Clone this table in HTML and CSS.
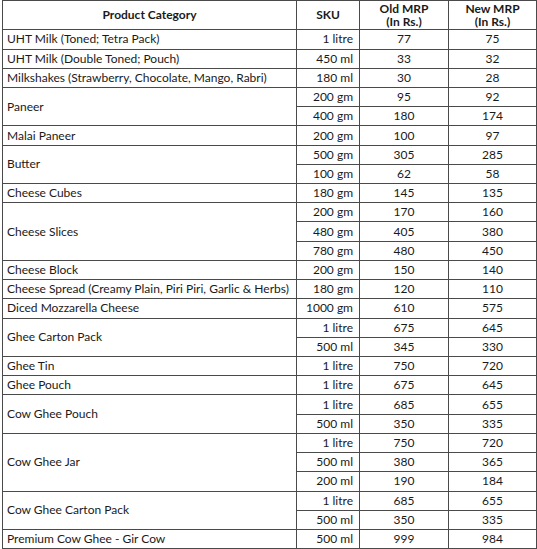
FILE: index.html
```html
<!DOCTYPE html>
<html>
<head>
<meta charset="utf-8">
<link rel="stylesheet" href="styles.css">
</head>
<body>
<table class="mrp">
  <colgroup>
    <col class="c-cat"><col class="c-sku"><col class="c-old"><col class="c-new">
  </colgroup>
  <thead>
    <tr class="head">
      <th>Product Category</th>
      <th>SKU</th>
      <th>Old MRP<br>(In Rs.)</th>
      <th>New MRP<br>(In Rs.)</th>
    </tr>
  </thead>
  <tbody>
    <tr><td class="cat">UHT Milk (Toned; Tetra Pack)</td><td class="sku">1 litre</td><td class="num">77</td><td class="num">75</td></tr>
    <tr><td class="cat">UHT Milk (Double Toned; Pouch)</td><td class="sku">450 ml</td><td class="num">33</td><td class="num">32</td></tr>
    <tr><td class="cat">Milkshakes (Strawberry, Chocolate, Mango, Rabri)</td><td class="sku">180 ml</td><td class="num">30</td><td class="num">28</td></tr>
    <tr><td class="cat" rowspan="2">Paneer</td><td class="sku">200 gm</td><td class="num">95</td><td class="num">92</td></tr>
    <tr><td class="sku">400 gm</td><td class="num">180</td><td class="num">174</td></tr>
    <tr><td class="cat">Malai Paneer</td><td class="sku">200 gm</td><td class="num">100</td><td class="num">97</td></tr>
    <tr><td class="cat" rowspan="2">Butter</td><td class="sku">500 gm</td><td class="num">305</td><td class="num">285</td></tr>
    <tr><td class="sku">100 gm</td><td class="num">62</td><td class="num">58</td></tr>
    <tr><td class="cat">Cheese Cubes</td><td class="sku">180 gm</td><td class="num">145</td><td class="num">135</td></tr>
    <tr><td class="cat" rowspan="3">Cheese Slices</td><td class="sku">200 gm</td><td class="num">170</td><td class="num">160</td></tr>
    <tr><td class="sku">480 gm</td><td class="num">405</td><td class="num">380</td></tr>
    <tr><td class="sku">780 gm</td><td class="num">480</td><td class="num">450</td></tr>
    <tr><td class="cat">Cheese Block</td><td class="sku">200 gm</td><td class="num">150</td><td class="num">140</td></tr>
    <tr><td class="cat">Cheese Spread (Creamy Plain, Piri Piri, Garlic &amp; Herbs)</td><td class="sku">180 gm</td><td class="num">120</td><td class="num">110</td></tr>
    <tr><td class="cat">Diced Mozzarella Cheese</td><td class="sku">1000 gm</td><td class="num">610</td><td class="num">575</td></tr>
    <tr><td class="cat" rowspan="2">Ghee Carton Pack</td><td class="sku">1 litre</td><td class="num">675</td><td class="num">645</td></tr>
    <tr><td class="sku">500 ml</td><td class="num">345</td><td class="num">330</td></tr>
    <tr><td class="cat">Ghee Tin</td><td class="sku">1 litre</td><td class="num">750</td><td class="num">720</td></tr>
    <tr><td class="cat">Ghee Pouch</td><td class="sku">1 litre</td><td class="num">675</td><td class="num">645</td></tr>
    <tr><td class="cat" rowspan="2">Cow Ghee Pouch</td><td class="sku">1 litre</td><td class="num">685</td><td class="num">655</td></tr>
    <tr><td class="sku">500 ml</td><td class="num">350</td><td class="num">335</td></tr>
    <tr><td class="cat" rowspan="3">Cow Ghee Jar</td><td class="sku">1 litre</td><td class="num">750</td><td class="num">720</td></tr>
    <tr><td class="sku">500 ml</td><td class="num">380</td><td class="num">365</td></tr>
    <tr><td class="sku">200 ml</td><td class="num">190</td><td class="num">184</td></tr>
    <tr><td class="cat" rowspan="2">Cow Ghee Carton Pack</td><td class="sku">1 litre</td><td class="num">685</td><td class="num">655</td></tr>
    <tr><td class="sku">500 ml</td><td class="num">350</td><td class="num">335</td></tr>
    <tr><td class="cat">Premium Cow Ghee - Gir Cow</td><td class="sku">500 ml</td><td class="num">999</td><td class="num">984</td></tr>
  </tbody>
</table>
</body>
</html>
```
FILE: styles.css
```css
html, body {
  margin: 0;
  padding: 0;
  background: #ffffff;
}
body {
  padding: 0 0 0 2px;
  font-family: "Lato", "Liberation Sans", sans-serif;
  font-size: 12px;
  color: #1a1a1a;
}
.mrp {
  border-collapse: collapse;
  table-layout: fixed;
  width: 534px;
}
.c-cat { width: 294px; }
.c-sku { width: 63px; }
.c-old { width: 89px; }
.c-new { width: 88px; }
.mrp th,
.mrp td {
  border: 1.5px solid #4a4a4a;
  padding: 0;
  line-height: 14px;
  white-space: nowrap;
  overflow: hidden;
}
.mrp .head {
  height: 29.3px;
}
.mrp .head th {
  font-weight: 700;
  text-align: center;
  vertical-align: middle;
  line-height: 13.5px;
}
.mrp tbody tr {
  height: 19.23px;
}
.mrp .cat {
  text-align: left;
  padding-left: 4px;
  vertical-align: middle;
}
.mrp .sku {
  text-align: right;
  padding-right: 6px;
}
.mrp .num {
  text-align: center;
}
```
